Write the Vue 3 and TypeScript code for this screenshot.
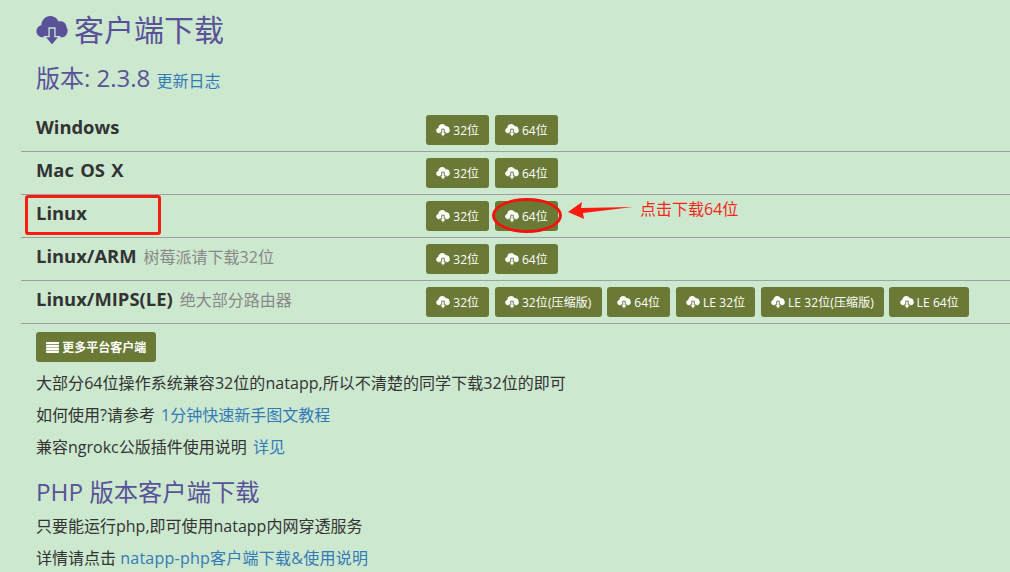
<script setup lang="ts">
interface Row { name: string; note?: string; buttons: string[] }
const rows: Row[] = [
  { name: 'Windows', buttons: ['32位', '64位'] },
  { name: 'Mac OS X', buttons: ['32位', '64位'] },
  { name: 'Linux', buttons: ['32位', '64位'] },
  { name: 'Linux/ARM', note: '树莓派请下载32位', buttons: ['32位', '64位'] },
  { name: 'Linux/MIPS(LE)', note: '绝大部分路由器', buttons: ['32位', '32位(压缩版)', '64位', 'LE 32位', 'LE 32位(压缩版)', 'LE 64位'] },
]
const cloud = 'M5 17.5C2.4 17.5.3 15.5.3 13c0-2.2 1.5-4 3.6-4.5C4.2 4.6 7 1.5 10.7 1.5c2.8 0 5.2 1.7 6.2 4.2 .5-.2 1-.3 1.5-.3 2.5 0 4.4 2 4.5 4.5 .5.7.8 1.6.8 2.6 0 2.8-2 5-4.7 5z'
const arrow = 'M9.8 10.5h4.4v6.5h3.3L12 23.5 6.5 17h3.3z'
</script>

<template>
  <main class="page">
    <h1 class="title">
      <svg class="title-icon" viewBox="0 0 24 24" aria-hidden="true">
        <path :d="cloud" />
        <path class="title-arrow" :d="arrow" />
      </svg>
      客户端下载
    </h1>
    <h2 class="version">版本: 2.3.8 <a class="log">更新日志</a></h2>

    <section class="rows">
      <div v-for="row in rows" :key="row.name" class="row">
        <div class="name">
          <strong>{{ row.name }}</strong>
          <span v-if="row.note" class="note">{{ row.note }}</span>
        </div>
        <div class="buttons">
          <a v-for="label in row.buttons" :key="label" class="btn">
            <svg class="btn-icon" viewBox="0 0 24 24" aria-hidden="true">
              <path :d="cloud" />
              <path class="btn-arrow" :d="arrow" />
            </svg>
            {{ label }}
          </a>
        </div>
      </div>
    </section>

    <a class="btn more">
      <svg class="list-icon" viewBox="0 0 14 12" aria-hidden="true">
        <path d="M0 0h14v2.500H0zM0 3.200h14v2.500H0zM0 6.400h14v2.500H0zM0 9.600h14V12H0z" />
      </svg>
      更多平台客户端
    </a>

    <p class="first">大部分64位操作系统兼容32位的natapp,所以不清楚的同学下载32位的即可</p>
    <p>如何使用?请参考 <a class="shift">1分钟快速新手图文教程</a></p>
    <p>兼容ngrokc公版插件使用说明 <a class="shift">详见</a></p>

    <h2 class="php">PHP 版本客户端下载</h2>
    <p>只要能运行php,即可使用natapp内网穿透服务</p>
    <p>详情请点击 <a class="wide">natapp-php客户端下载&amp;使用说明</a></p>

    <div class="mark-box"></div>
    <div class="mark-ring"></div>
    <svg class="mark-arrow" viewBox="0 0 66 17" aria-hidden="true">
      <path d="M0 10 14 0l-1 6 52-1-50 6 1 6z" />
    </svg>
    <span class="mark-text">点击下载64位</span>
  </main>
</template>

<style>
html, body { margin: 0; background: #cce8cf; overflow: hidden; }
</style>

<style scoped>
.page {
  position: relative;
  height: 572px;
  overflow: hidden;
  padding-left: 21px;
  box-sizing: border-box;
  background: #cce8cf;
  color: #333;
  font-family: "Open Sans", "Noto Sans CJK SC", sans-serif;
  font-size: 16px;
}
.title {
  display: flex;
  align-items: center;
  gap: 6px;
  height: 34px;
  margin: 0;
  padding: 13px 0 0 15px;
  color: #5a5299;
  font-size: 30px;
  font-weight: 400;
  line-height: 34px;
}
.title-icon { width: 32px; height: 32px; fill: #5a5299; }
.title-arrow { fill: #5a5299; stroke: #cce8cf; stroke-width: 1; }
.version {
  height: 30px;
  margin: 16px 0 0;
  padding-left: 15px;
  color: #5a5299;
  font-size: 24px;
  font-weight: 400;
  line-height: 30px;
}
.log { color: #337ab7; font-size: 16px; }
.rows { margin-top: 16px; }
.row {
  display: flex;
  align-items: center;
  height: 42px;
  padding-left: 15px;
  border-bottom: 1px solid #a09e9e;
}
.name { width: 390px; font-size: 18.4px; margin-top: -8px; word-spacing: 1.5px; }
.name strong { font-weight: 700; }
.note { margin-left: 7px; color: #888; font-size: 16px; }
.buttons { display: flex; gap: 5.3px; }
.btn {
  display: inline-flex;
  align-items: center;
  gap: 3px;
  height: 30px;
  padding: 0 10.2px;
  box-sizing: border-box;
  border-radius: 3px;
  background: #6a7a36;
  color: #fff;
  font-size: 12px;
  letter-spacing: .1px;
  white-space: nowrap;
}
.btn-icon { width: 14px; height: 14px; fill: #fff; }
.btn-arrow { fill: #fff; stroke: #6a7a36; stroke-width: 1.6; }
.more {
  margin: 8px 0 0 15px;
  font-weight: 700;
  letter-spacing: 0;
}
.list-icon { width: 13px; height: 11px; fill: #fff; }
p { margin: 0; height: 32px; padding-left: 15px; line-height: 32px; }
.first { margin-top: 5px; letter-spacing: .05px; }
p a { color: #337ab7; }
p a.shift { margin-left: 2px; }
p a.wide { letter-spacing: .25px; }
.php {
  height: 30px;
  margin: 14px 0 3px;
  padding-left: 15px;
  color: #5a5299;
  font-size: 24.3px;
  font-weight: 400;
  line-height: 30px;
}
.mark-box {
  position: absolute;
  left: 25px;
  top: 195px;
  width: 136px;
  height: 40px;
  box-sizing: border-box;
  border: 3px solid #fb1c10;
  border-radius: 3px;
}
.mark-ring {
  position: absolute;
  left: 492px;
  top: 198px;
  width: 70px;
  height: 35px;
  box-sizing: border-box;
  border: 3px solid #f0140c;
  border-radius: 50%;
}
.mark-arrow {
  position: absolute;
  left: 568px;
  top: 202px;
  width: 66px;
  height: 17px;
  fill: #fb1c10;
}
.mark-text {
  position: absolute;
  left: 640px;
  top: 198px;
  color: #f5261a;
  font-size: 16px;
  line-height: 22px;
}
</style>
